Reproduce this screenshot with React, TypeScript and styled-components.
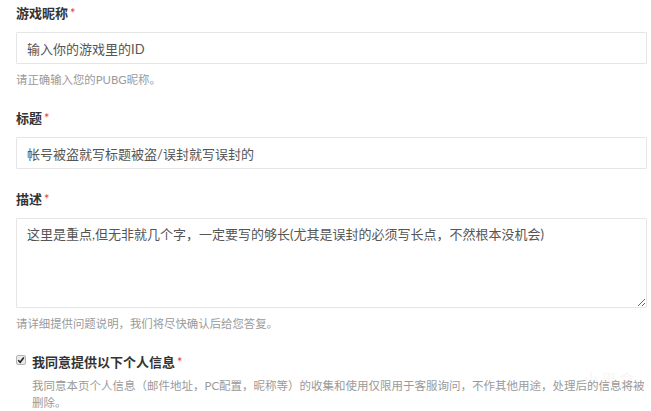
import React from "react";
import styled, { createGlobalStyle } from "styled-components";

const Global = createGlobalStyle`
  html, body { margin: 0; padding: 0; background: #fff; }
  body {
    font-family: Lato, "Noto Sans CJK SC", "Noto Sans", sans-serif;
    color: #333;
  }
  * { box-sizing: border-box; }
`;

const Form = styled.form`
  display: flex;
  flex-direction: column;
  padding: 3px 4px 0 16px;
  position: relative;
`;

const Group = styled.div<{ $top?: number }>`
  display: flex;
  flex-direction: column;
  margin-top: ${(p) => p.$top ?? 0}px;
`;

const Label = styled.label`
  font-size: 13px;
  font-weight: 700;
  line-height: 20px;
  color: #333;
  margin-bottom: 9px;
`;

const Star = styled.span`
  color: #e0393e;
  margin-left: 2px;
  font-size: 13px;
  font-weight: 400;
`;

const fieldBase = `
  width: 100%;
  border: 1px solid #e6e6e6;
  border-radius: 1px;
  background: #fff;
  color: #555;
  font-family: Lato, "Noto Sans CJK SC", "Noto Sans", sans-serif;
  font-size: 13px;
  outline: none;
`;

const TextInput = styled.input`
  ${fieldBase}
  height: 32px;
  padding: 0 10px;
  line-height: 30px;
`;

const TextArea = styled.textarea`
  ${fieldBase}
  display: block;
  height: 90px;
  padding: 5px 10px;
  line-height: 20px;
  resize: vertical;
`;

const Help = styled.div`
  font-size: 11.4px;
  line-height: 18px;
  color: #9a9a9a;
  margin-top: 7px;
`;

const CheckRow = styled.div`
  display: flex;
  align-items: center;
  gap: 6px;
  margin-top: 19px;
`;

const CheckBox = styled.span`
  width: 10px;
  height: 10px;
  border: 1px solid #b5b5b5;
  border-radius: 2px;
  background: #e9e9e9;
  display: flex;
  align-items: center;
  justify-content: center;
  margin-top: -5px;
`;

const CheckLabel = styled.span`
  font-size: 13px;
  font-weight: 700;
  line-height: 20px;
  color: #333;
`;

const Desc = styled.p`
  margin: 5px 0 0 16px;
  font-size: 11.5px;
  line-height: 17px;
  color: #9a9a9a;
`;

const Watermark = styled.span`
  position: absolute;
  right: 14px;
  bottom: 20px;
  font-size: 16px;
  font-weight: 700;
  color: rgba(0, 0, 0, 0.04);
  letter-spacing: 2px;
  pointer-events: none;
`;

export default function App() {
  return (
    <>
      <Global />
      <Form onSubmit={(e) => e.preventDefault()}>
        <Group>
          <Label>
            游戏昵称<Star>*</Star>
          </Label>
          <TextInput defaultValue="输入你的游戏里的ID" />
          <Help>请正确输入您的PUBG昵称。</Help>
        </Group>
        <Group $top={19}>
          <Label>
            标题<Star>*</Star>
          </Label>
          <TextInput defaultValue="帐号被盗就写标题被盗/误封就写误封的" />
        </Group>
        <Group $top={20}>
          <Label>
            描述<Star>*</Star>
          </Label>
          <TextArea defaultValue="这里是重点,但无非就几个字，一定要写的够长(尤其是误封的必须写长点，不然根本没机会)" />
          <Help>请详细提供问题说明，我们将尽快确认后给您答复。</Help>
        </Group>
        <CheckRow>
          <CheckBox>
            <svg width="8" height="8" viewBox="0 0 8 8">
              <path d="M1.2 4.2 L3.2 6.2 L6.8 1.6" fill="none" stroke="#222" strokeWidth="1.6" />
            </svg>
          </CheckBox>
          <CheckLabel>
            我同意提供以下个人信息<Star>*</Star>
          </CheckLabel>
        </CheckRow>
        <Desc>
          我同意本页个人信息（邮件地址，PC配置，昵称等）的收集和使用仅限用于客服询问，不作其他用途，处理后的信息将被删除。
        </Desc>
        <Watermark>小黑盒</Watermark>
      </Form>
    </>
  );
}
